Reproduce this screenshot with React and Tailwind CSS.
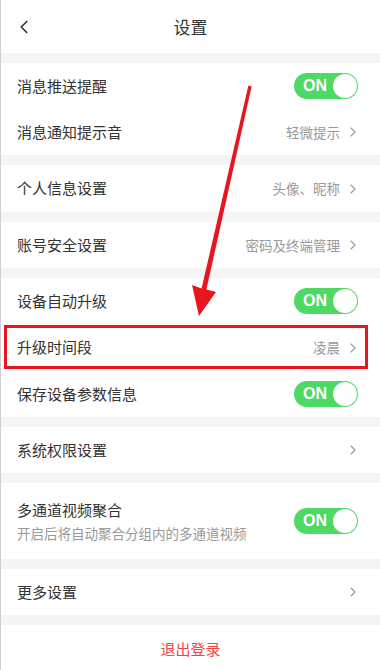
import { ChevronLeft, ChevronRight } from "lucide-react";

const font = { fontFamily: '"Noto Sans CJK SC", "Noto Sans", sans-serif' };

function Toggle() {
  return (
    <div className="flex h-[26px] w-[64px] items-center justify-between rounded-full bg-[#4cd964] pl-[9px] pr-[1px]">
      <span className="font-['Liberation_Sans',Arial,sans-serif] text-[16px] font-bold leading-none text-white">ON</span>
      <span className="h-[24px] w-[24px] rounded-full bg-white" />
    </div>
  );
}

function Row({ label, value, toggle, arrow, tall }) {
  return (
    <div className="flex h-[46px] items-center bg-white pl-4 pr-[22px]">
      <span className="flex-1 text-[15px] text-[#333]">{label}</span>
      {value && <span className="text-[13.5px] text-[#999]">{value}</span>}
      {arrow && <ChevronRight className="ml-[5px] -mr-[3px] text-[#999]" size={16} strokeWidth={1.6} />}
      {toggle && <Toggle />}
    </div>
  );
}

const Gap = () => <div className="h-[10px] bg-[#f5f5f5]" />;

export default function App() {
  return (
    <div className="relative h-[670px] w-[380px] overflow-hidden border-l border-[#cfcfcf] bg-white" style={font}>
      {/* header */}
      <div className="relative flex h-[53px] items-center justify-center bg-white">
        <ChevronLeft className="absolute left-[12px] top-[16px] text-[#333]" size={22} strokeWidth={1.8} />
        <span className="text-[17px] text-[#333]">设置</span>
      </div>

      <Gap />
      <Row label="消息推送提醒" toggle />
      <Row label="消息通知提示音" value="轻微提示" arrow />
      <Gap />
      <div className="h-[47px]">
        <div className="flex h-full items-center bg-white pl-4 pr-[22px]">
          <span className="flex-1 text-[15px] text-[#333]">个人信息设置</span>
          <span className="text-[13.5px] text-[#999]">头像、昵称</span>
          <ChevronRight className="ml-[5px] -mr-[3px] text-[#999]" size={16} strokeWidth={1.6} />
        </div>
      </div>
      <Gap />
      <Row label="账号安全设置" value="密码及终端管理" arrow />
      <Gap />
      <Row label="设备自动升级" toggle />
      <div className="h-[47px]">
        <div className="flex h-full items-center bg-white pl-4 pr-[22px]">
          <span className="flex-1 text-[15px] text-[#333]">升级时间段</span>
          <span className="text-[13.5px] text-[#999]">凌晨</span>
          <ChevronRight className="ml-[5px] -mr-[3px] text-[#999]" size={16} strokeWidth={1.6} />
        </div>
      </div>
      <Row label="保存设备参数信息" toggle />
      <Gap />
      <Row label="系统权限设置" arrow />
      <Gap />
      <div className="flex h-[76px] items-center bg-white pl-4 pr-[22px]">
        <div className="flex flex-1 flex-col gap-[3px] pt-[-2px]">
          <span className="text-[15px] leading-[20px] text-[#333]">多通道视频聚合</span>
          <span className="text-[13.5px] leading-[20px] text-[#999]">开启后将自动聚合分组内的多通道视频</span>
        </div>
        <Toggle />
      </div>
      <Gap />
      <Row label="更多设置" arrow />
      <Gap />
      <div className="flex h-[48px] items-center justify-center bg-white">
        <span className="text-[15px] text-[#f04444]">退出登录</span>
      </div>

      {/* annotation overlay */}
      <div className="absolute left-[3px] top-[325px] h-[44px] w-[364px] border-[3px] border-[#e8141e]" />
      <svg className="absolute left-0 top-0" width="380" height="670" viewBox="0 0 380 670">
        <path
          d="M247.4 85.6 L250.6 86.4 L205.4 289.6 L215 292 L198 316 L191 285 L200.6 288.4 Z"
          fill="#e8141e"
        />
      </svg>
    </div>
  );
}
